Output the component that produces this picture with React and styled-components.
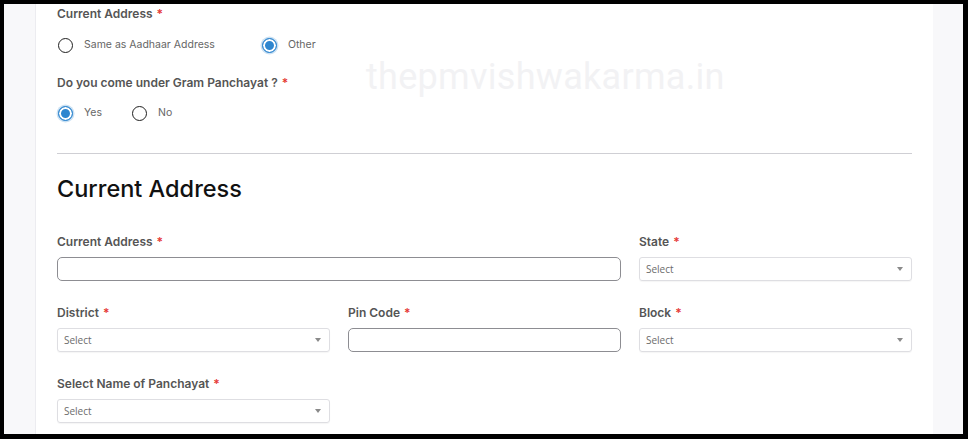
import React from 'react'
import styled, { createGlobalStyle } from 'styled-components'

const GlobalStyle = createGlobalStyle`
  html, body { margin: 0; padding: 0; background: #000; }
  * { box-sizing: border-box; }
`

const Frame = styled.div`
  position: relative;
  width: 968px;
  height: 439px;
  overflow: hidden;
  border-style: solid;
  border-color: #000;
  border-width: 4px 5px 5px 4px;
  background: #f8f8fa;
  display: flex;
  padding-left: 31px;
  padding-right: 30px;
`

const Card = styled.div`
  flex: 1;
  background: #fff;
  border-left: 1px solid #ececf0;
  padding: 0 21px 0 21px;
  font-family: Inter, "Noto Sans", sans-serif;
`

const Watermark = styled.div`
  position: absolute;
  left: 362px;
  top: 52px;
  font-family: Roboto, "Liberation Sans", sans-serif;
  font-size: 36px;
  font-weight: 400;
  letter-spacing: 0.3px;
  color: #f2f2f4;
  pointer-events: none;
  white-space: nowrap;
`

const Label = styled.div`
  font-size: 12px;
  line-height: 16px;
  font-weight: 600;
  color: #555;
  margin-top: ${p => p.$top || 0}px;

  span {
    color: #e53935;
    margin-left: 4px;
  }
`

const RadioGroup = styled.div`
  display: flex;
  align-items: center;
  height: 16px;
  margin-top: ${p => p.$top || 14}px;
  gap: ${p => p.$spacing}px;
`

const RadioOption = styled.label`
  display: flex;
  align-items: center;
  gap: 11px;
  font-size: 10.5px;
  color: #666;
  line-height: 16px;
`

const RadioCircle = styled.span`
  width: 15px;
  height: 15px;
  border-radius: 50%;
  margin-left: 1px;
  border: 1.5px solid ${p => (p.$checked ? '#2f86cf' : '#1f1f1f')};
  background: ${p => (p.$checked ? '#2f86cf' : '#fff')};
  box-shadow: ${p => (p.$checked ? 'inset 0 0 0 2px #fff, 0 0 0 1.5px rgba(47,134,207,0.25)' : 'none')};
`

const Divider = styled.hr`
  border: none;
  border-top: 1px solid #cfcfd4;
  margin: 32px 0 0;
`

const Heading = styled.h2`
  margin: 21px 0 0;
  font-size: 23.5px;
  line-height: 28px;
  font-weight: 500;
  color: #111;
`

const Grid = styled.div`
  display: grid;
  grid-template-columns: 273px 273px 273px;
  column-gap: 18px;
  row-gap: 24px;
  margin-top: 31px;
`

const Field = styled.div`
  grid-column: span ${p => p.$span || 1};
  display: flex;
  flex-direction: column;
  gap: 7px;
`

const TextInput = styled.input`
  height: 24px;
  width: 100%;
  border: 1px solid #8d8d92;
  border-radius: 5px;
  outline: none;
  background: #fff;
`

const SelectBox = styled.div`
  height: 24px;
  border: 1px solid #dedee2;
  border-radius: 3px;
  box-shadow: 0 1px 1px rgba(0, 0, 0, 0.04);
  display: flex;
  align-items: center;
  justify-content: space-between;
  padding: 0 8px 0 6px;
  font-family: "Open Sans", "Liberation Sans", sans-serif;
  font-size: 10px;
  color: #6b6b6b;

  &::after {
    content: '';
    border-left: 3px solid transparent;
    border-right: 3px solid transparent;
    border-top: 4px solid #8a8a8a;
  }
`

function Req({ children }) {
  return <>{children}<span>*</span></>
}

function Radio({ checked, children }) {
  return (
    <RadioOption>
      <RadioCircle $checked={checked} />
      {children}
    </RadioOption>
  )
}

export default function App() {
  return (
    <>
      <GlobalStyle />
      <Frame>
        <Card>
          <Label $top={2}><Req>Current Address</Req></Label>
          <RadioGroup $top={15} $spacing={46}>
            <Radio>Same as Aadhaar Address</Radio>
            <Radio checked>Other</Radio>
          </RadioGroup>
          <Label $top={22}><Req>Do you come under Gram Panchayat ?</Req></Label>
          <RadioGroup $spacing={29}>
            <Radio checked>Yes</Radio>
            <Radio>No</Radio>
          </RadioGroup>
          <Divider />
          <Heading>Current Address</Heading>
          <Grid>
            <Field $span={2}>
              <Label><Req>Current Address</Req></Label>
              <TextInput type="text" />
            </Field>
            <Field>
              <Label><Req>State</Req></Label>
              <SelectBox>Select</SelectBox>
            </Field>
            <Field>
              <Label><Req>District</Req></Label>
              <SelectBox>Select</SelectBox>
            </Field>
            <Field>
              <Label><Req>Pin Code</Req></Label>
              <TextInput type="text" />
            </Field>
            <Field>
              <Label><Req>Block</Req></Label>
              <SelectBox>Select</SelectBox>
            </Field>
            <Field>
              <Label><Req>Select Name of Panchayat</Req></Label>
              <SelectBox>Select</SelectBox>
            </Field>
          </Grid>
        </Card>
        <Watermark>thepmvishwakarma.in</Watermark>
      </Frame>
    </>
  )
}
